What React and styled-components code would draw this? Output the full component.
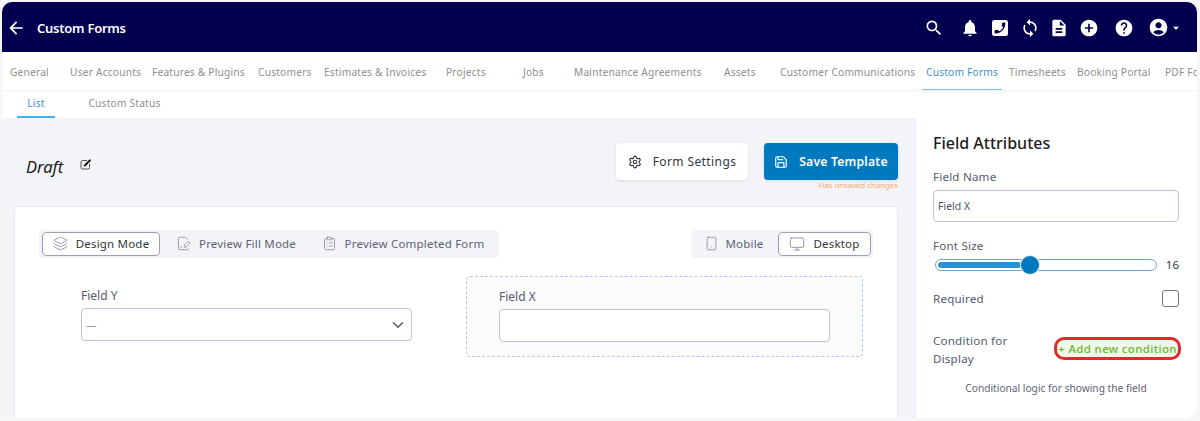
import React from "react";
import styled, { createGlobalStyle } from "styled-components";
import {
  MdArrowBack,
  MdSearch,
  MdNotifications,
  MdSync,
  MdDescription,
  MdAddCircle,
  MdHelp,
  MdAccountCircle,
  MdArrowDropDown,
} from "react-icons/md";
import {
  ChevronDown,
  FileSignature,
  ClipboardList,
  Layers,
  Monitor,
  Save,
  Settings,
  Smartphone,
} from "lucide-react";

const GlobalStyle = createGlobalStyle`
  html, body {
    margin: 0;
    padding: 0;
    background: #f6f6f8;
  }
  body {
    font-family: "Noto Sans", "Open Sans", sans-serif;
  }
  * {
    box-sizing: border-box;
  }
`;

const Frame = styled.div`
  margin: 2px 3px 0 2px;
  height: 416px;
  border-radius: 10px;
  overflow: hidden;
  display: flex;
  flex-direction: column;
  background: #f3f4f7;
`;

const Header = styled.header`
  height: 50px;
  flex: none;
  background: #03004f;
  color: #fff;
  display: flex;
  align-items: center;
  padding: 1px 0 0 4px;
`;

const Title = styled.div`
  margin-left: 11px;
  font-size: 13px;
  font-weight: 600;
  letter-spacing: -0.25px;
`;

const HeaderIcons = styled.div`
  margin-left: auto;
  display: flex;
  align-items: center;
  width: 273px;
`;

const HeaderIcon = styled.span`
  display: flex;
  align-items: center;
  margin-left: ${(p) => p.$left || 0}px;
`;

const PhoneBox = styled.svg`
  width: 20px;
  height: 20px;
  display: block;
`;

const Tabs = styled.nav`
  height: 39px;
  flex: none;
  background: #fff;
  display: flex;
  padding-left: 4px;
  border-bottom: 1px solid #f3f3f5;
  overflow: hidden;
`;

const Tab = styled.div`
  flex: 0 0 ${(p) => p.$w}px;
  min-width: 0;
  display: flex;
  align-items: stretch;
`;

const TabLabel = styled.span`
  padding: 2px 4px 0;
  display: flex;
  align-items: center;
  white-space: nowrap;
  font-size: 10.2px;
  letter-spacing: 0.2px;
  color: ${(p) => (p.$active ? "#3d93cf" : "#8e8e8e")};
  border-bottom: 1px solid ${(p) => (p.$active ? "#7fc1ee" : "transparent")};
`;

const SubTabs = styled.nav`
  height: 27px;
  flex: none;
  background: #fff;
  display: flex;
  padding-left: 15px;
`;

const SubTab = styled.div`
  width: ${(p) => p.$w}px;
  display: flex;
  align-items: center;
  justify-content: center;
  padding-bottom: 2px;
  margin-right: ${(p) => p.$gap || 0}px;
  font-size: 10.2px;
  letter-spacing: 0.2px;
  white-space: nowrap;
  color: ${(p) => (p.$active ? "#3d93cf" : "#8e8e8e")};
  border-bottom: 2px solid ${(p) => (p.$active ? "#3fb0ee" : "transparent")};
`;

const Body = styled.div`
  flex: 1;
  min-height: 0;
  display: flex;
`;

const Main = styled.main`
  width: 913px;
  flex: none;
  padding: 25px 17px 0 12px;
  display: flex;
  flex-direction: column;
`;

const TopRow = styled.div`
  display: flex;
  align-items: flex-start;
  height: 63px;
`;

const DraftTitle = styled.div`
  margin: 12px 0 0 12px;
  display: flex;
  align-items: center;
  gap: 17px;
  font-style: italic;
  font-size: 16.5px;
  color: #1a1a1a;
`;

const EditGlyph = styled.svg`
  width: 12px;
  height: 12px;
  margin-top: -5px;
  display: block;
`;

const Actions = styled.div`
  margin-left: auto;
  display: flex;
  gap: 16px;
`;

const SettingsButton = styled.button`
  width: 132px;
  height: 37px;
  border: none;
  border-radius: 4px;
  background: #fff;
  box-shadow: 0 1px 3px rgba(40, 50, 80, 0.12);
  display: flex;
  align-items: center;
  justify-content: center;
  gap: 11px;
  font-family: inherit;
  font-size: 12px;
  letter-spacing: 0.4px;
  color: #33363f;
`;

const SaveColumn = styled.div`
  display: flex;
  flex-direction: column;
  align-items: flex-end;
`;

const SaveButton = styled(SettingsButton)`
  width: 134px;
  background: #0079bf;
  color: #fff;
  font-size: 12.2px;
  font-weight: 600;
  letter-spacing: 0.2px;
`;

const Unsaved = styled.div`
  font-size: 7.8px;
  color: #f2a76a;
`;

const Card = styled.section`
  flex: 1;
  background: #fff;
  border: 1px solid #e6ebf3;
  border-bottom: none;
  border-radius: 5px 5px 0 0;
  padding: 23px 24px 0 24px;
`;

const CardToolbar = styled.div`
  display: flex;
  justify-content: space-between;
`;

const ModeGroup = styled.div`
  height: 28px;
  width: ${(p) => p.$w}px;
  padding: 2px 2px 2px 3px;
  background: #f3f4f7;
  border-radius: 5px;
  display: flex;
  gap: ${(p) => p.$gap}px;
`;

const ModeButton = styled.div`
  width: ${(p) => p.$w}px;
  height: 24px;
  border-radius: 4px;
  display: flex;
  align-items: center;
  justify-content: center;
  gap: ${(p) => p.$iconGap || 8}px;
  padding-bottom: 1px;
  font-size: 11.5px;
  letter-spacing: 0.2px;
  white-space: nowrap;
  color: ${(p) => (p.$active ? "#33363f" : "#5f6276")};
  background: ${(p) => (p.$active ? "#fff" : "transparent")};
  border: 1px solid ${(p) => (p.$active ? "#9ca0b6" : "transparent")};
  svg {
    color: #7d8093;
  }
`;

const FormCanvas = styled.div`
  display: flex;
  margin-top: 18px;
  padding-left: 42px;
  gap: 54px;
`;

const FieldSlot = styled.div`
  width: 331px;
  padding-top: 12px;
`;

const SelectedSlot = styled.div`
  width: 397px;
  height: 81px;
  padding: 12px 32px;
  background: #fbfbfc;
  border: 1px dashed #b6c8ef;
  border-radius: 4px;
`;

const FieldLabel = styled.div`
  font-size: 12px;
  line-height: 16px;
  margin-bottom: 4px;
  color: #555a70;
`;

const InputBox = styled.div`
  height: ${(p) => p.$h || 33}px;
  background: #fff;
  border: 1px solid #bcc4d8;
  border-radius: 4px;
  display: flex;
  align-items: center;
  justify-content: space-between;
  padding: 0 4px;
  font-size: 10.5px;
  color: #50535f;
`;

const Placeholder = styled.span`
  color: #9a9ca6;
`;

const Panel = styled.aside`
  flex: 1;
  background: #fff;
  border-left: 1px solid #e6e9f2;
  padding: 14px 18px 0 17px;
  display: flex;
  flex-direction: column;
`;

const PanelTitle = styled.h2`
  margin: 0;
  font-size: 16px;
  line-height: 22px;
  font-weight: 500;
  color: #1d1d22;
`;

const PanelLabel = styled.div`
  font-size: 11.6px;
  line-height: 16px;
  letter-spacing: 0.2px;
  color: #555a70;
  margin-top: ${(p) => p.$top || 0}px;
  margin-bottom: ${(p) => p.$bottom || 0}px;
`;

const SliderRow = styled.div`
  display: flex;
  align-items: center;
  margin-top: 3px;
  padding-left: 2px;
  justify-content: space-between;
  font-size: 11.5px;
  color: #33363f;
`;

const SliderTrack = styled.div`
  position: relative;
  width: 222px;
  height: 12px;
  padding: 2px;
  border: 1px solid #6ea6d8;
  border-radius: 6px;
  background: #fff;
`;

const SliderFill = styled.div`
  height: 100%;
  border-radius: 3px;
  background: #2f90cb;
`;

const SliderThumb = styled.div`
  position: absolute;
  top: -4px;
  width: 18px;
  height: 18px;
  border-radius: 50%;
  background: #0079bf;
  box-shadow: 0 0 0 1px #dfe4ec;
`;

const CheckRow = styled.div`
  display: flex;
  align-items: center;
  justify-content: space-between;
  margin-top: 18px;
`;

const CheckBox = styled.div`
  width: 17px;
  height: 17px;
  border: 1px solid #6f7280;
  border-radius: 3px;
`;

const ConditionRow = styled.div`
  display: flex;
  align-items: center;
  justify-content: space-between;
  margin-top: 25px;
  margin-right: -2px;
`;

const ConditionLabel = styled(PanelLabel)`
  line-height: 18px;
  width: 100px;
`;

const AddCondition = styled.div`
  width: 127px;
  height: 23px;
  margin-bottom: 3px;
  border: 3px solid #dc2c2c;
  border-radius: 10px;
  background: #f1f8ea;
  display: flex;
  align-items: center;
  justify-content: center;
  white-space: nowrap;
  font-size: 11.5px;
  font-weight: 500;
  letter-spacing: 0.35px;
  color: #6cb52d;
`;

const Hint = styled.div`
  margin-top: 13px;
  text-align: center;
  font-size: 10.2px;
  color: #5f6276;
`;

const tabs = [
  ["General", 60],
  ["User Accounts", 82],
  ["Features & Plugins", 106],
  ["Customers", 66],
  ["Estimates & Invoices", 122],
  ["Projects", 77],
  ["Jobs", 51],
  ["Maintenance Agreements", 150],
  ["Assets", 56],
  ["Customer Communications", 146],
  ["Custom Forms", 83, true],
  ["Timesheets", 68],
  ["Booking Portal", 88],
  ["PDF Forms", 80],
];

const sliderRatio = 0.385;

const PhoneIcon = () => (
  <PhoneBox viewBox="0 0 20 20">
    <rect x="2" y="2" width="16" height="16" rx="2.5" fill="#fff" />
    <path
      transform="translate(17.2 2.8) scale(-0.6 0.6)"
      d="M6.62 10.79c1.44 2.83 3.76 5.14 6.59 6.59l2.2-2.2c.27-.27.67-.36 1.02-.24 1.12.37 2.33.57 3.57.57.55 0 1 .45 1 1V20c0 .55-.45 1-1 1-9.39 0-17-7.61-17-17 0-.55.45-1 1-1h3.500c.55 0 1 .45 1 1 0 1.25.2 2.45.57 3.57.11.35.03.74-.25 1.02l-2.2 2.2z"
      fill="#03004f"
    />
  </PhoneBox>
);

const EditIcon = () => (
  <EditGlyph viewBox="0 0 12 12">
    <path
      d="M7 2.500H2.500A1.500 1.500 0 0 0 1 4v5.500A1.500 1.500 0 0 0 2.500 11H8a1.500 1.500 0 0 0 1.500-1.500V6"
      fill="none"
      stroke="#555"
      strokeWidth="1"
    />
    <path d="M4 6.700L9.300 1.400a.7.7 0 0 1 1 0l.5.500a.7.7 0 0 1 0 1L5.500 8.200 3.700 8.500z" fill="#222" />
  </EditGlyph>
);

export default function App() {
  return (
    <>
      <GlobalStyle />
      <Frame>
        <Header>
          <MdArrowBack size={20} />
          <Title>Custom Forms</Title>
          <HeaderIcons>
            <HeaderIcon>
              <MdSearch size={20} />
            </HeaderIcon>
            <HeaderIcon $left={16}>
              <MdNotifications size={20} />
            </HeaderIcon>
            <HeaderIcon $left={10}>
              <PhoneIcon />
            </HeaderIcon>
            <HeaderIcon $left={10}>
              <MdSync size={20} />
            </HeaderIcon>
            <HeaderIcon $left={9}>
              <MdDescription size={20} />
            </HeaderIcon>
            <HeaderIcon $left={10}>
              <MdAddCircle size={20} />
            </HeaderIcon>
            <HeaderIcon $left={15}>
              <MdHelp size={20} />
            </HeaderIcon>
            <HeaderIcon $left={14}>
              <MdAccountCircle size={21} />
              <MdArrowDropDown size={14} />
            </HeaderIcon>
          </HeaderIcons>
        </Header>
        <Tabs>
          {tabs.map(([name, w, active]) => (
            <Tab key={name} $w={w}>
              <TabLabel $active={active}>{name}</TabLabel>
            </Tab>
          ))}
        </Tabs>
        <SubTabs>
          <SubTab $w={38} $gap={34} $active>
            List
          </SubTab>
          <SubTab $w={71}>Custom Status</SubTab>
        </SubTabs>
        <Body>
          <Main>
            <TopRow>
              <DraftTitle>
                Draft
                <EditIcon />
              </DraftTitle>
              <Actions>
                <SettingsButton>
                  <Settings size={14} />
                  Form Settings
                </SettingsButton>
                <SaveColumn>
                  <SaveButton>
                    <Save size={14} />
                    Save Template
                  </SaveButton>
                  <Unsaved>Has unsaved changes</Unsaved>
                </SaveColumn>
              </Actions>
            </TopRow>
            <Card>
              <CardToolbar>
                <ModeGroup $w={460} $gap={0}>
                  <ModeButton $w={118} $active>
                    <Layers size={15} strokeWidth={1.2} />
                    Design Mode
                  </ModeButton>
                  <ModeButton $w={152}>
                    <FileSignature size={15} strokeWidth={1.2} />
                    Preview Fill Mode
                  </ModeButton>
                  <ModeButton $w={182}>
                    <ClipboardList size={15} strokeWidth={1.2} />
                    Preview Completed Form
                  </ModeButton>
                </ModeGroup>
                <ModeGroup $w={182} $gap={4}>
                  <ModeButton $w={80} $iconGap={6}>
                    <Smartphone size={15} strokeWidth={1.2} />
                    Mobile
                  </ModeButton>
                  <ModeButton $w={93} $active>
                    <Monitor size={16} strokeWidth={1.2} />
                    Desktop
                  </ModeButton>
                </ModeGroup>
              </CardToolbar>
              <FormCanvas>
                <FieldSlot>
                  <FieldLabel>Field Y</FieldLabel>
                  <InputBox>
                    <Placeholder>—</Placeholder>
                    <ChevronDown size={18} color="#555a70" />
                  </InputBox>
                </FieldSlot>
                <SelectedSlot>
                  <FieldLabel>Field X</FieldLabel>
                  <InputBox />
                </SelectedSlot>
              </FormCanvas>
            </Card>
          </Main>
          <Panel>
            <PanelTitle>Field Attributes</PanelTitle>
            <PanelLabel $top={15} $bottom={5}>
              Field Name
            </PanelLabel>
            <InputBox $h={32}>Field X</InputBox>
            <PanelLabel $top={16}>Font Size</PanelLabel>
            <SliderRow>
              <SliderTrack>
                <SliderFill style={{ width: `${sliderRatio * 100}%` }} />
                <SliderThumb style={{ left: `${sliderRatio * 100}%` }} />
              </SliderTrack>
              16
            </SliderRow>
            <CheckRow>
              <PanelLabel>Required</PanelLabel>
              <CheckBox />
            </CheckRow>
            <ConditionRow>
              <ConditionLabel>
                Condition for
                <br />
                Display
              </ConditionLabel>
              <AddCondition>+ Add new condition</AddCondition>
            </ConditionRow>
            <Hint>Conditional logic for showing the field</Hint>
          </Panel>
        </Body>
      </Frame>
    </>
  );
}
